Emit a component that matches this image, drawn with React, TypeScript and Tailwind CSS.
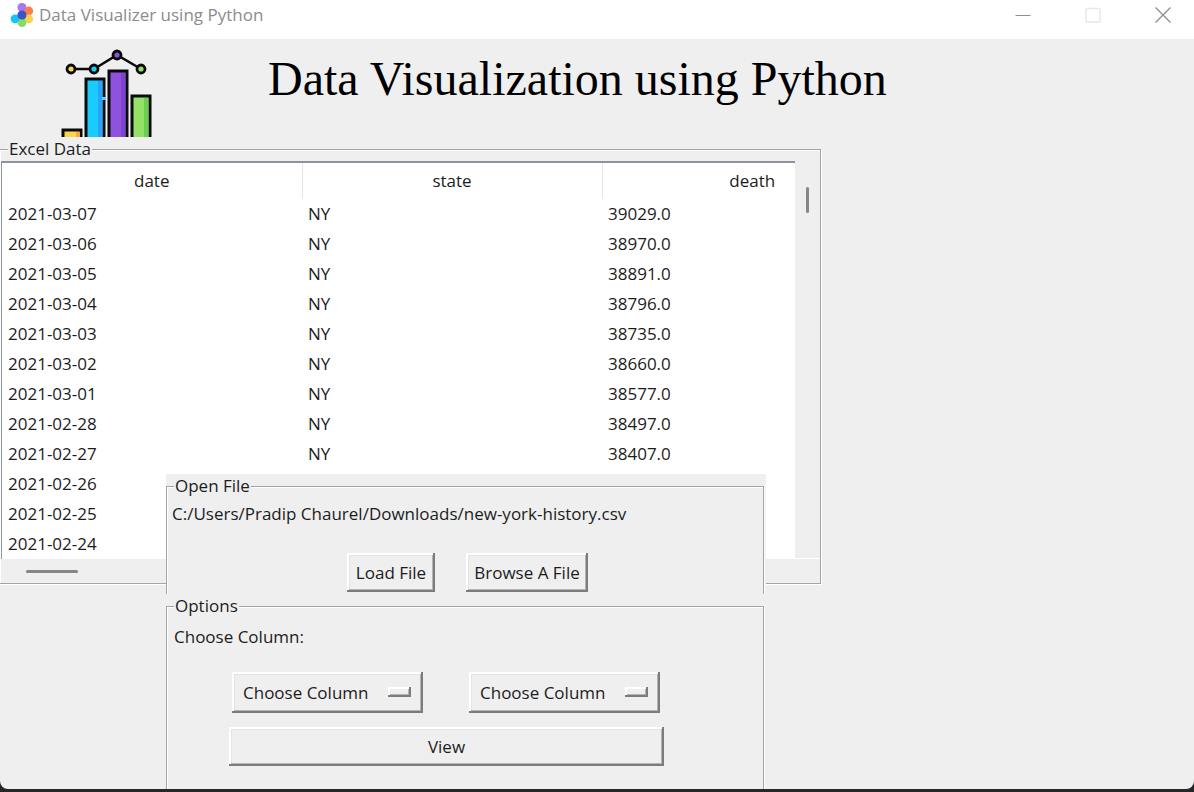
import type { ReactNode } from 'react';

const rows = [
  ['2021-03-07', 'NY', '39029.0'],
  ['2021-03-06', 'NY', '38970.0'],
  ['2021-03-05', 'NY', '38891.0'],
  ['2021-03-04', 'NY', '38796.0'],
  ['2021-03-03', 'NY', '38735.0'],
  ['2021-03-02', 'NY', '38660.0'],
  ['2021-03-01', 'NY', '38577.0'],
  ['2021-02-28', 'NY', '38497.0'],
  ['2021-02-27', 'NY', '38407.0'],
  ['2021-02-26', '', ''],
  ['2021-02-25', '', ''],
  ['2021-02-24', '', ''],
];

const bevel =
  'bg-[#efefef] shadow-[inset_-2px_-2px_0_#7c7c7c,inset_2px_2px_0_#ffffff,inset_-3px_-3px_0_#b4b4b4,inset_3px_3px_0_#e4e4e4]';

function AppIcon() {
  return (
    <svg className="h-6 w-6 shrink-0" viewBox="0 0 24 24" aria-hidden="true">
      <circle cx="12" cy="4.500" r="4.500" fill="#a678ee" />
      <circle cx="18.800" cy="8" r="4.400" fill="#ff7d45" />
      <circle cx="18.800" cy="16" r="4.400" fill="#f8d34c" />
      <circle cx="12" cy="19.600" r="4.400" fill="#84dc62" />
      <circle cx="5" cy="15.800" r="4.400" fill="#14c4fb" />
      <circle cx="12" cy="12" r="4.600" fill="#3d54c4" />
    </svg>
  );
}

function ChartLogo() {
  return (
    <svg className="h-[88px] w-[92px] shrink-0" viewBox="0 0 92 88" aria-hidden="true">
      <g stroke="#0a0a0a" strokeWidth="3">
        <path d="M2 90V81h18v9" fill="#f8d84a" />
        <path d="M25 90V30h18v60" fill="#18cdfc" />
        <path d="M48 90V22h18v68" fill="#8f52de" />
        <path d="M71 90V47h18v43" fill="#93e264" />
      </g>
      <path d="M15 83h4v5h-4z" fill="#fba53e" />
      <path d="M37 32h4.500v56H37z" fill="#2ea2fb" />
      <path d="M60 24h4.500v64H60z" fill="#7b43cf" />
      <path d="M83 49h4.500v39H83z" fill="#6bcf55" />
      <path d="M41 48h4v3h-4z" fill="#5cc8ff" />
      <path d="M10 20H33L56 6L80 20" fill="none" stroke="#0a0a0a" strokeWidth="2.500" />
      <g stroke="#0a0a0a" strokeWidth="2.800">
        <circle cx="10" cy="20" r="4" fill="#f8d84a" />
        <circle cx="33" cy="20" r="4" fill="#18cdfc" />
        <circle cx="56" cy="6" r="4" fill="#8f52de" />
        <circle cx="80" cy="20" r="4" fill="#93e264" />
      </g>
    </svg>
  );
}

function Group({ title, className, children }: { title: string; className: string; children: ReactNode }) {
  return (
    <fieldset className={`min-w-0 border border-[#a4a4a4] ${className}`}>
      <legend className="ml-[7px] bg-[#efefef] px-px leading-6">{title}</legend>
      {children}
    </fieldset>
  );
}

function ColumnSelect({ label }: { label: string }) {
  return (
    <div className="relative w-[191px]">
      <select
        aria-label={label}
        className={`h-[41px] w-full appearance-none rounded-none pr-10 pl-[11px] outline-none ${bevel}`}
      >
        <option>Choose Column</option>
      </select>
      <span className="pointer-events-none absolute top-[15px] right-3 h-[10px] w-[23px] bg-[#efefef] shadow-[inset_-2px_-2px_0_#7c7c7c,inset_2px_2px_0_#ffffff,inset_-3px_-3px_0_#b4b4b4]" />
    </div>
  );
}

export default function App() {
  return (
    <div className="flex min-h-screen flex-col bg-[#26252a] pb-[3px] font-['Open_Sans','Noto_Sans',sans-serif] text-[17px] text-[#1c1c1c]">
      <header className="flex h-[39px] shrink-0 items-start justify-between bg-white">
        <div className="flex items-center gap-[5px] pt-px pl-[10px] leading-7 text-[#8c8c8c]">
          <AppIcon />
          <span>Data Visualizer using Python</span>
        </div>
        <div className="flex pt-[3px] text-[#8f8f8f]">
          <button type="button" aria-label="Minimize" className="grid h-6 w-[62px] place-items-center">
            <svg width="16" height="16" viewBox="0 0 16 16" stroke="currentColor">
              <path d="M0.500 8.500h15" />
            </svg>
          </button>
          <button type="button" aria-label="Maximize" disabled className="grid h-6 w-[78px] place-items-center text-[#e8e8e8]">
            <svg width="16" height="16" viewBox="0 0 16 16" fill="none" stroke="currentColor">
              <rect x="1" y="1.500" width="14" height="13.500" rx="1" strokeWidth="1.500" />
            </svg>
          </button>
          <button type="button" aria-label="Close" className="grid h-6 w-[62px] place-items-center">
            <svg width="16" height="16" viewBox="0 0 16 16" stroke="currentColor" strokeWidth="1.400">
              <path d="M0.500 0.500l15 15M15.500 0.500l-15 15" />
            </svg>
          </button>
        </div>
      </header>

      <main className="flex grow flex-col overflow-hidden rounded-b-lg bg-[#efefef]">
        <div className="flex h-[98px] items-start overflow-hidden pt-[10px] pl-[61px]">
          <ChartLogo />
          <h1 className="ml-[115px] font-['Liberation_Serif',serif] text-[48px] leading-[60px] whitespace-nowrap text-black">
            Data Visualization using Python
          </h1>
        </div>

        <Group title="Excel Data" className="-ml-px w-[822px] max-w-full pl-px shadow-[inset_1px_1px_0_#fff,1px_1px_0_#fff]">
          <div className="flex">
            <div className="min-w-0 grow overflow-hidden border-t-2 border-l border-[#8d939c] bg-white">
              <table className="w-[900px] table-fixed border-collapse">
                <thead>
                  <tr className="h-9">
                    <th className="border-r border-[#e6e6e6] font-normal">date</th>
                    <th className="border-r border-[#e6e6e6] font-normal">state</th>
                    <th className="font-normal">death</th>
                  </tr>
                </thead>
                <tbody>
                  {rows.map(([date, state, death]) => (
                    <tr key={date} className="h-[30px]">
                      <td className="p-0 pl-1.5">{date}</td>
                      <td className="p-0 pl-1.5">{state}</td>
                      <td className="p-0 pl-1.5">{death}</td>
                    </tr>
                  ))}
                </tbody>
              </table>
            </div>
            <div className="w-[25px] shrink-0 border-b border-white pt-[26px]">
              <div className="mx-auto h-[26px] w-[3px] rounded-sm bg-[#868686]" />
            </div>
          </div>
          <div className="h-6 pt-[11px] pl-[25px]">
            <div className="h-[3px] w-[52px] rounded-sm bg-[#868686]" />
          </div>
        </Group>

        <div className="relative z-10 -mt-[110px] ml-[166px] flex w-[600px] max-w-full grow flex-col bg-[#efefef] pr-0.5">
          <Group title="Open File" className="h-[120px] border-b-0 shadow-[inset_1px_1px_0_#fff,1px_0_0_#fff]">
            <p className="pl-[5px] leading-8">C:/Users/Pradip Chaurel/Downloads/new-york-history.csv</p>
            <div className="mt-[23px] ml-[180px] flex gap-[31px]">
              <button type="button" className={`h-[39px] w-[88px] whitespace-nowrap ${bevel}`}>
                Load File
              </button>
              <button type="button" className={`h-[39px] w-[122px] whitespace-nowrap ${bevel}`}>
                Browse A File
              </button>
            </div>
          </Group>
          <Group title="Options" className="grow border-b-0 shadow-[inset_1px_1px_0_#fff,1px_0_0_#fff]">
            <p className="pt-[5px] pl-[7px] leading-7">Choose Column:</p>
            <div className="mt-[21px] ml-[65px] flex gap-[46px]">
              <ColumnSelect label="First column" />
              <ColumnSelect label="Second column" />
            </div>
            <button type="button" className={`mt-[14px] mb-[22px] ml-[62px] block h-[39px] w-[435px] ${bevel}`}>
              View
            </button>
          </Group>
        </div>
      </main>
    </div>
  );
}
